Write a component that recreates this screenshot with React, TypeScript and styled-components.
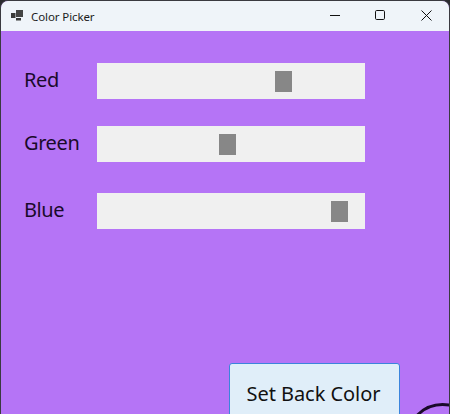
import styled, { createGlobalStyle } from "styled-components";

const GlobalStyle = createGlobalStyle`
  html, body {
    margin: 0;
    padding: 0;
    background: #2b2b2e;
    overflow: hidden;
  }
`;

const Window = styled.div`
  width: 450px;
  height: 414px;
  box-sizing: border-box;
  overflow: hidden;
  position: relative;
  border: 1px solid #3a3a40;
  border-bottom: none;
  border-radius: 8px 8px 0 0;
  background: #b574f6;
  font-family: "Noto Sans", "Open Sans", sans-serif;
`;

const TitleBar = styled.div`
  height: 30px;
  display: flex;
  align-items: center;
  padding-left: 10px;
  background: #eff4f9;
  color: #1c1c1c;
  font-size: 11.5px;
`;

const AppIcon = styled.svg`
  width: 13px;
  height: 12px;
  margin-right: 7px;
`;

const TitleText = styled.span`
  flex: 1;
  letter-spacing: -0.1px;
`;

const CaptionButton = styled.div`
  width: 45px;
  height: 30px;
  display: flex;
  align-items: center;
  justify-content: center;
`;

const Content = styled.div`
  display: flex;
  flex-direction: column;
  padding: 32px 0 0 23px;
`;

const Row = styled.div<{ $top: number }>`
  display: flex;
  align-items: center;
  margin-top: ${(p) => p.$top}px;
`;

const Label = styled.div`
  width: 73px;
  font-size: 20px;
  letter-spacing: -0.4px;
  line-height: 36px;
  margin-top: -2px;
  color: #1a0a2a;
`;

const Track = styled.div`
  width: 268px;
  height: 36px;
  background: #f0f0f0;
  display: flex;
  align-items: center;
`;

const Thumb = styled.div<{ $left: number }>`
  width: 17px;
  height: 21px;
  margin-left: ${(p) => p.$left}px;
  background: #878787;
`;

const Footer = styled.div`
  display: flex;
  padding: 134px 0 0 228px;
`;

const SetButton = styled.button`
  width: 171px;
  height: 70px;
  flex: none;
  box-sizing: border-box;
  padding: 0 2px 10px 0;
  border: 1px solid #3b84dc;
  border-radius: 3px;
  background: #e0eef9;
  color: #111;
  font-family: inherit;
  font-size: 20px;
  letter-spacing: -0.05px;
`;

const Knob = styled.svg`
  position: absolute;
  right: -1px;
  bottom: 0;
  width: 36px;
  height: 11px;
`;

const rows = [
  { name: "Red", top: 0, thumb: 178 },
  { name: "Green", top: 27, thumb: 122 },
  { name: "Blue", top: 31, thumb: 234 },
];

export default function App() {
  return (
    <Window>
      <GlobalStyle />
      <TitleBar>
        <AppIcon viewBox="0 0 13 12">
          <rect x="0" y="3" width="4.5" height="5" fill="#3a3a3a" />
          <rect x="5" y="0" width="7" height="7" fill="#444" />
          <rect x="5" y="8" width="5" height="2.5" fill="#3a3a3a" />
        </AppIcon>
        <TitleText>Color Picker</TitleText>
        <CaptionButton>
          <svg width="13" height="12" viewBox="0 0 13 12">
            <path d="M0 5.5H10" stroke="#111" fill="none" />
          </svg>
        </CaptionButton>
        <CaptionButton>
          <svg width="13" height="12" viewBox="0 0 13 12">
            <rect x="0.5" y="0.5" width="9" height="9" rx="1.2" stroke="#111" fill="none" />
          </svg>
        </CaptionButton>
        <CaptionButton>
          <svg width="11" height="12" viewBox="0 0 11 12">
            <path d="M0.5 0.5L10.5 10.5M10.5 0.5L0.5 10.5" stroke="#111" fill="none" />
          </svg>
        </CaptionButton>
      </TitleBar>
      <Content>
        {rows.map((r) => (
          <Row key={r.name} $top={r.top}>
            <Label>{r.name}</Label>
            <Track>
              <Thumb $left={r.thumb} />
            </Track>
          </Row>
        ))}
      </Content>
      <Footer>
        <SetButton>Set Back Color</SetButton>
      </Footer>
      <Knob viewBox="0 0 36 11">
        <circle cx="28.5" cy="36.5" r="35" stroke="#1a0a2a" strokeWidth="3" fill="none" />
      </Knob>
    </Window>
  );
}
